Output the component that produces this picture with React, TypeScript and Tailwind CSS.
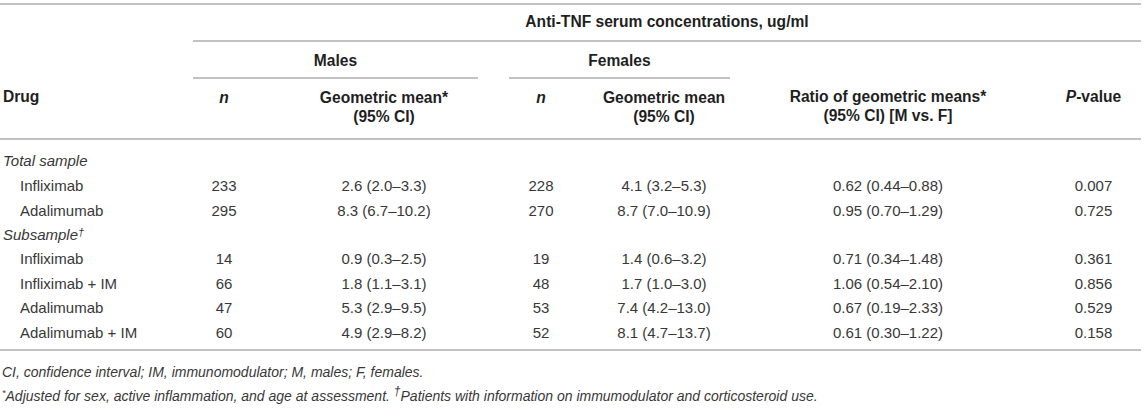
import React from "react";

type Row = {
  drug: string;
  nM: string;
  gmM: string;
  nF: string;
  gmF: string;
  ratio: string;
  p: string;
};

const totalRows: Row[] = [
  { drug: "Infliximab", nM: "233", gmM: "2.6 (2.0–3.3)", nF: "228", gmF: "4.1 (3.2–5.3)", ratio: "0.62 (0.44–0.88)", p: "0.007" },
  { drug: "Adalimumab", nM: "295", gmM: "8.3 (6.7–10.2)", nF: "270", gmF: "8.7 (7.0–10.9)", ratio: "0.95 (0.70–1.29)", p: "0.725" },
];

const subRows: Row[] = [
  { drug: "Infliximab", nM: "14", gmM: "0.9 (0.3–2.5)", nF: "19", gmF: "1.4 (0.6–3.2)", ratio: "0.71 (0.34–1.48)", p: "0.361" },
  { drug: "Infliximab + IM", nM: "66", gmM: "1.8 (1.1–3.1)", nF: "48", gmF: "1.7 (1.0–3.0)", ratio: "1.06 (0.54–2.10)", p: "0.856" },
  { drug: "Adalimumab", nM: "47", gmM: "5.3 (2.9–9.5)", nF: "53", gmF: "7.4 (4.2–13.0)", ratio: "0.67 (0.19–2.33)", p: "0.529" },
  { drug: "Adalimumab + IM", nM: "60", gmM: "4.9 (2.9–8.2)", nF: "52", gmF: "8.1 (4.7–13.7)", ratio: "0.61 (0.30–1.22)", p: "0.158" },
];

const DataRow = ({ row }: { row: Row }) => (
  <tr className="h-[24.4px]">
    <td className="pl-[20px] text-left">{row.drug}</td>
    <td className="text-center">{row.nM}</td>
    <td className="pl-[35px] text-center">{row.gmM}</td>
    <td />
    <td className="text-center">{row.nF}</td>
    <td className="pl-[25px] text-center">{row.gmF}</td>
    <td className="text-center">{row.ratio}</td>
    <td className="text-center">{row.p}</td>
  </tr>
);

export default function App() {
  return (
    <div className="w-[1145px] h-[420px] bg-white pt-[3px] font-['Liberation_Sans',Arial,sans-serif] text-[#383838]">
      <table className="w-[1141px] table-fixed border-collapse text-[15px] leading-[18px]">
        <colgroup>
          <col className="w-[193px]" />
          <col className="w-[62px]" />
          <col className="w-[223px]" />
          <col className="w-[31px]" />
          <col className="w-[64px]" />
          <col className="w-[157px]" />
          <col className="w-[316px]" />
          <col className="w-[95px]" />
        </colgroup>
        <thead className="text-[15.6px] font-bold text-[#1f1f1f]">
          <tr className="border-t-2 border-[#c2c2c2]">
            <th />
            <th
              colSpan={7}
              className="h-[37px] pb-[2px] border-b-2 border-[#c2c2c2] text-center font-bold"
            >
              Anti-TNF serum concentrations, ug/ml
            </th>
          </tr>
          <tr>
            <th />
            <th colSpan={2} className="h-[37px] pt-[2px] border-b-2 border-[#c2c2c2] text-center font-bold">
              Males
            </th>
            <th />
            <th colSpan={2} className="h-[37px] pt-[2px] border-b-2 border-[#c2c2c2] text-center font-bold">
              Females
            </th>
            <th />
            <th />
          </tr>
          <tr className="border-b-2 border-[#c2c2c2] align-top leading-[19px]">
            <th className="h-[61px] pt-[9px] pl-[3px] text-left font-bold">Drug</th>
            <th className="pt-[9px] text-center font-bold italic">n</th>
            <th className="pt-[9px] pl-[35px] text-center font-bold">
              Geometric mean*
              <br />
              (95% CI)
            </th>
            <th />
            <th className="pt-[9px] text-center font-bold italic">n</th>
            <th className="pt-[9px] pl-[25px] text-center font-bold">
              Geometric mean
              <br />
              (95% CI)
            </th>
            <th className="pt-[9px] text-center font-bold">
              Ratio of geometric means*
              <br />
              (95% CI) [M vs. F]
            </th>
            <th className="pt-[9px] text-center font-bold">
              <span className="italic">P</span>-value
            </th>
          </tr>
        </thead>
        <tbody className="border-b-2 border-[#c2c2c2]">
          <tr className="h-[35px]">
            <td colSpan={8} className="pt-[8px] pl-[3px] text-left italic">
              Total sample
            </td>
          </tr>
          {totalRows.map((r, i) => (
            <DataRow key={"t" + i} row={r} />
          ))}
          <tr className="h-[24.4px]">
            <td colSpan={8} className="pl-[3px] text-left italic">
              Subsample
              <sup className="relative -top-[4px] text-[11px]">†</sup>
            </td>
          </tr>
          {subRows.map((r, i) => (
            <DataRow key={"s" + i} row={r} />
          ))}
          <tr className="h-[5px]">
            <td colSpan={8} />
          </tr>
        </tbody>
      </table>
      <div className="pt-[9px] pl-[2px] text-[14px] leading-[24px] italic text-[#383838]">
        <p>CI, confidence interval; IM, immunomodulator; M, males; F, females.</p>
        <p>
          <sup className="text-[9px]">*</sup>Adjusted for sex, active inflammation, and age at assessment.{" "}
          <sup className="text-[12px]">†</sup>Patients with information on immumodulator and corticosteroid use.
        </p>
      </div>
    </div>
  );
}
